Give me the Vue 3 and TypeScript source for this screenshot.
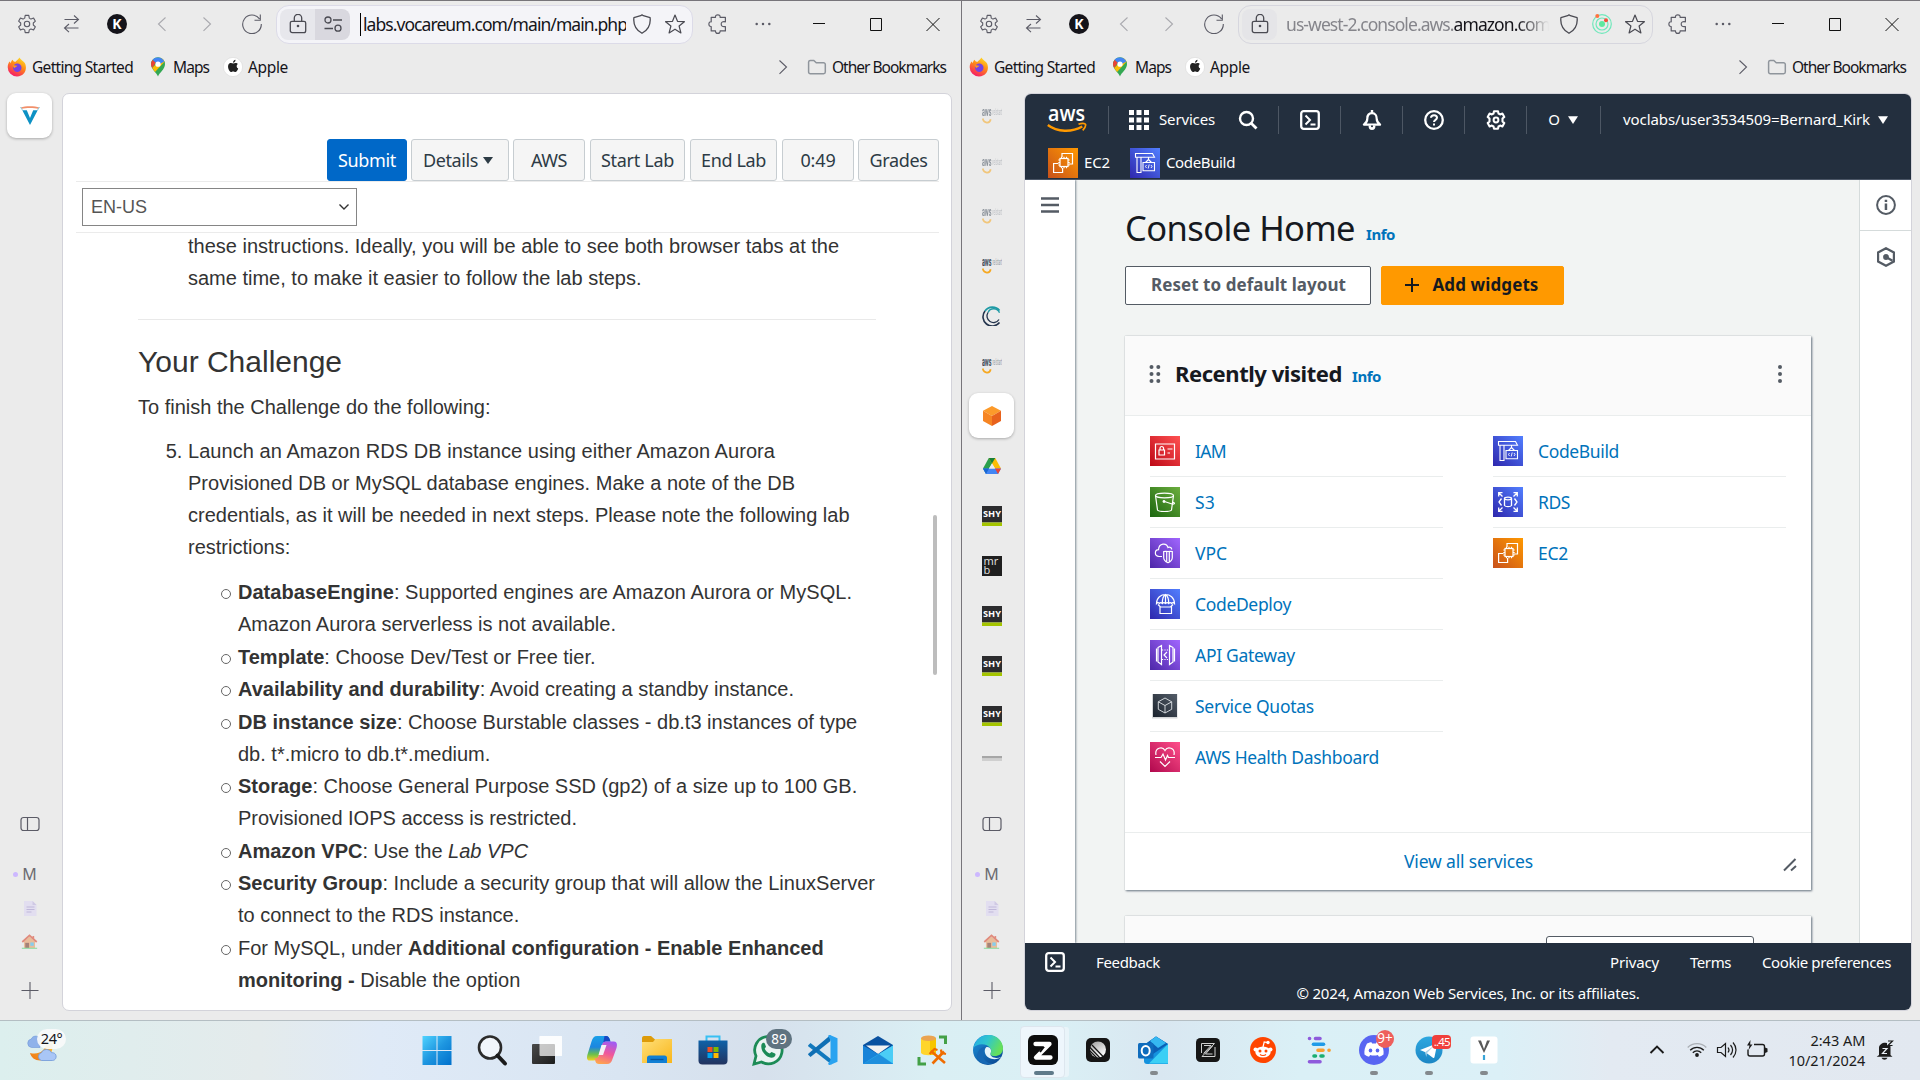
<script setup lang="ts">
interface BrowserWindow {
  id: string
  active: boolean
  tabs: { kind: string; faded?: boolean; selected?: boolean }[]
}

interface Service {
  name: string
  icon: string
  width: number
}

const windows: BrowserWindow[] = [
  { id: 'lab', active: true, tabs: [{ kind: 'voc', selected: true }] },
  {
    id: 'console',
    active: false,
    tabs: [
      { kind: 'aws', faded: true },
      { kind: 'aws', faded: true },
      { kind: 'aws', faded: true },
      { kind: 'aws' },
      { kind: 'coursera' },
      { kind: 'aws' },
      { kind: 'cube', selected: true },
      { kind: 'drive' },
      { kind: 'shy' },
      { kind: 'mrb' },
      { kind: 'shy' },
      { kind: 'shy' },
      { kind: 'shy' },
      { kind: 'cut' },
    ],
  },
]

const firstColumn: Service[] = [
  { name: 'IAM', icon: 'iam', width: 31 },
  { name: 'S3', icon: 's3', width: 20 },
  { name: 'VPC', icon: 'vpc', width: 32 },
  { name: 'CodeDeploy', icon: 'deploy', width: 96 },
  { name: 'API Gateway', icon: 'gateway', width: 100 },
  { name: 'Service Quotas', icon: 'quotas', width: 119 },
  { name: 'AWS Health Dashboard', icon: 'health', width: 184 },
]
const secondColumn: Service[] = [
  { name: 'CodeBuild', icon: 'build', width: 81 },
  { name: 'RDS', icon: 'rds', width: 32 },
  { name: 'EC2', icon: 'ec2', width: 30 },
]

const labButtons = [
  { label: 'Submit', box: 80, text: 58, gap: 4, primary: true },
  { label: 'Details', box: 98, text: 55, gap: 4, caret: true },
  { label: 'AWS', box: 72, text: 36, gap: 5 },
  { label: 'Start Lab', box: 95, text: 73, gap: 5 },
  { label: 'End Lab', box: 87, text: 65, gap: 5 },
  { label: '0:49', box: 72, text: 35, gap: 4 },
  { label: 'Grades', box: 81, text: 58, gap: 0 },
]

const apps = [
  { icon: 'start' },
  { icon: 'find' },
  { icon: 'taskview' },
  { icon: 'copilot' },
  { icon: 'explorer' },
  { icon: 'store' },
  { icon: 'whatsapp', badge: '89', tone: 'slate' },
  { icon: 'vscode' },
  { icon: 'mail' },
  { icon: 'dbtool' },
  { icon: 'edge' },
  { icon: 'zen', open: true, current: true },
  { icon: 'linear' },
  { icon: 'outlook', open: true },
  { icon: 'zed' },
  { icon: 'reddit' },
  { icon: 'tasks' },
  { icon: 'discord', open: true, badge: '9+', tone: 'coral' },
  { icon: 'telegram', open: true, badge: '..45', tone: 'red' },
  { icon: 'vapp', open: true },
]

// Tracks a label out or in so that it takes the given width in pixels.
const vFit = {
  mounted(el: HTMLElement, binding: { value: number }) {
    const natural = el.getBoundingClientRect().width
    const count = (el.textContent ?? '').trim().length
    el.style.letterSpacing = `${((binding.value - natural) / count).toFixed(3)}px`
  },
}
</script>

<template>
  <svg class="defs" width="0" height="0" aria-hidden="true">
    <defs>
      <linearGradient id="gOrange" x1="0" y1="1" x2="1" y2="0"><stop offset="0" stop-color="#c8511b" /><stop offset="1" stop-color="#f90" /></linearGradient>
      <linearGradient id="gBlue" x1="0" y1="1" x2="1" y2="0"><stop offset="0" stop-color="#2e27ad" /><stop offset="1" stop-color="#527fff" /></linearGradient>
      <linearGradient id="gRed" x1="0" y1="1" x2="1" y2="0"><stop offset="0" stop-color="#bd0816" /><stop offset="1" stop-color="#ff5252" /></linearGradient>
      <linearGradient id="gGreen" x1="0" y1="1" x2="1" y2="0"><stop offset="0" stop-color="#1b660f" /><stop offset="1" stop-color="#6cae3e" /></linearGradient>
      <linearGradient id="gPurple" x1="0" y1="1" x2="1" y2="0"><stop offset="0" stop-color="#4d27a8" /><stop offset="1" stop-color="#a166ff" /></linearGradient>
      <linearGradient id="gPink" x1="0" y1="1" x2="1" y2="0"><stop offset="0" stop-color="#b0084d" /><stop offset="1" stop-color="#ff4f8b" /></linearGradient>
      <linearGradient id="gSlate" x1="0" y1="1" x2="1" y2="0"><stop offset="0" stop-color="#1a222c" /><stop offset="1" stop-color="#545d69" /></linearGradient>
      <linearGradient id="gWin" x1="0" y1="0" x2="1" y2="1"><stop offset="0" stop-color="#4fd3ff" /><stop offset=".5" stop-color="#1e96e0" /><stop offset="1" stop-color="#0070cc" /></linearGradient>
      <linearGradient id="gFolder" x1="0" y1="0" x2="1" y2="1"><stop offset="0" stop-color="#ffe07a" /><stop offset="1" stop-color="#f9b61b" /></linearGradient>
      <linearGradient id="gStore" x1="0" y1="0" x2="0" y2="1"><stop offset="0" stop-color="#0f62a8" /><stop offset="1" stop-color="#22335f" /></linearGradient>
      <linearGradient id="gFox" x1=".8" y1="0" x2=".3" y2="1"><stop offset="0" stop-color="#ffe226" /><stop offset=".45" stop-color="#ff8a16" /><stop offset="1" stop-color="#f5156c" /></linearGradient>
      <linearGradient id="gCopA" x1="0" y1="0" x2="0" y2="1"><stop offset="0" stop-color="#1aa0e8" /><stop offset=".45" stop-color="#1c86e0" /><stop offset=".75" stop-color="#6cc04a" /><stop offset="1" stop-color="#f2d321" /></linearGradient>
      <linearGradient id="gCopB" x1=".6" y1="0" x2=".3" y2="1"><stop offset="0" stop-color="#a35cf0" /><stop offset=".5" stop-color="#f0579b" /><stop offset="1" stop-color="#ffa64d" /></linearGradient>
      <linearGradient id="gEdgeA" x1="0" y1="0" x2="1" y2=".4"><stop offset="0" stop-color="#25a8e8" /><stop offset=".5" stop-color="#2fc6ce" /><stop offset="1" stop-color="#66e05a" /></linearGradient>
      <linearGradient id="gEdgeB" x1="0" y1="0" x2=".7" y2="1"><stop offset="0" stop-color="#1d96e0" /><stop offset="1" stop-color="#0c4c96" /></linearGradient>
      <linearGradient id="gTg" x1="0" y1="0" x2="0" y2="1"><stop offset="0" stop-color="#2ea8e0" /><stop offset="1" stop-color="#1c86c4" /></linearGradient>
      <linearGradient id="gBall" x1="0" y1="0" x2=".6" y2="1"><stop offset="0" stop-color="#9a9a9a" /><stop offset="1" stop-color="#fff" /></linearGradient>
      <linearGradient id="gMoon" x1="1" y1="0" x2="0" y2="1"><stop offset="0" stop-color="#fbc23c" /><stop offset="1" stop-color="#ee7410" /></linearGradient>
      <linearGradient id="gView" x1="0" y1="0" x2="1" y2="1"><stop offset="0" stop-color="#4a4a4a" /><stop offset="1" stop-color="#1c1c1c" /></linearGradient>
    </defs>

    <symbol id="gear" viewBox="0 0 20 20"><g fill="none" stroke="currentColor" stroke-width="1.100" stroke-linejoin="round"><path d="M8.200.7h3.600l.5 2.700 1.700 1 2.600-1 1.800 3.100-2.100 1.800v2l2.100 1.800-1.800 3.100-2.600-1-1.700 1-.5 2.700H8.200l-.5-2.700-1.700-1-2.600 1L1.600 12.100l2.100-1.800v-2L1.600 6.500l1.800-3.100 2.600 1 1.700-1z" transform="translate(0 .7)" /><circle cx="10" cy="10" r="2.700" /></g></symbol>
    <symbol id="swap" viewBox="0 0 20 20"><path d="M2.500 5.500h14M12 1.500l4.500 4-4.500 4M16.500 14h-14M7 10l-4.500 4L7 18.200" fill="none" stroke="currentColor" stroke-width="1.100" /></symbol>
    <symbol id="back" viewBox="0 0 20 20"><path d="M13.500 3.500L6.500 10l7 6.800" fill="none" stroke="currentColor" stroke-width="1.100" /></symbol>
    <symbol id="fwd" viewBox="0 0 20 20"><path d="M6.500 3.500l7 6.500-7 6.800" fill="none" stroke="currentColor" stroke-width="1.100" /></symbol>
    <symbol id="reload" viewBox="0 0 20 20"><path d="M17.500 4.800A9.300 9.300 0 1 0 19.300 10M18.300.5v5.800h-5.800" fill="none" stroke="currentColor" stroke-width="1.100" /></symbol>
    <symbol id="lock" viewBox="0 0 20 20"><path d="M4 7.300h12a1.700 1.700 0 0 1 1.700 1.700v7.700a1.900 1.900 0 0 1-1.900 1.900H4.200a1.900 1.900 0 0 1-1.900-1.900V9A1.700 1.700 0 0 1 4 7.300zM6.300 7.300V4a3.700 3.700 0 0 1 7.400 0v3.300" fill="none" stroke="currentColor" stroke-width="1.300" /><circle cx="10" cy="12" r="1.300" fill="currentColor" /></symbol>
    <symbol id="perms" viewBox="0 0 20 20"><g fill="none" stroke="currentColor" stroke-width="1.300"><circle cx="5" cy="6" r="3" /><path d="M10 6h9M1.500 14.500h8.500" /><circle cx="15" cy="14.200" r="3" /></g></symbol>
    <symbol id="shield" viewBox="0 0 20 20"><path d="M10 .8l1.300.9 6.800 2c.7 6.500-1.500 12-8.100 15.600C3.400 15.700 1.200 10.200 1.900 3.700l6.800-2z" fill="none" stroke="currentColor" stroke-width="1.300" stroke-linejoin="round" /></symbol>
    <symbol id="star" viewBox="0 0 20 20"><path d="M10 1l2.500 6.300 6.900.4-5.300 4.300 1.800 6.900L10 15.200l-5.900 3.700 1.800-6.900L.6 7.700l6.900-.4z" fill="none" stroke="currentColor" stroke-width="1.200" stroke-linejoin="round" /></symbol>
    <symbol id="puzzle" viewBox="0 0 20 20"><path d="M3.200 3.300h4.300C7.300 1.700 8.300.8 9.800.8s2.500.9 2.300 2.500h5.300v4.500c-3.300-.6-4.200.7-4.200 2.300s.9 3 4.200 2.400v4.400h-5.300c.2 1.600-.8 2.500-2.300 2.500s-2.500-.9-2.300-2.500H3.200v-4.400C1.500 12.600.9 11.600.9 10.100s.6-2.500 2.300-2.300z" fill="none" stroke="currentColor" stroke-width="1.200" stroke-linejoin="round" /></symbol>
    <symbol id="dots" viewBox="0 0 20 20"><g fill="currentColor"><circle cx="3" cy="10" r="1.400" /><circle cx="10" cy="10" r="1.400" /><circle cx="17" cy="10" r="1.400" /></g></symbol>
    <symbol id="wmin" viewBox="0 0 20 20"><path d="M4 9.500h12" stroke="currentColor" /></symbol>
    <symbol id="wmax" viewBox="0 0 20 20"><path d="M4.500 4.500h11v12h-11z" fill="none" stroke="currentColor" /></symbol>
    <symbol id="wclose" viewBox="0 0 20 20"><path d="M3.500 4l13 13M16.500 4l-13 13" stroke="currentColor" /></symbol>
    <symbol id="folder" viewBox="0 0 20 20"><path d="M1.600 5A1.700 1.700 0 0 1 3.300 3.500h3.500l2.500 2.300h7.200A1.700 1.700 0 0 1 18.300 7.500v7.600a1.700 1.700 0 0 1-1.700 1.700H3.300a1.700 1.700 0 0 1-1.700-1.700z" fill="none" stroke="#8f959c" stroke-width="1.500" /></symbol>
    <symbol id="radar" viewBox="0 0 20 20"><g fill="none" stroke="#6fe8bb" stroke-width="1.200"><circle cx="10" cy="10" r="9.300" /><circle cx="10" cy="10" r="6" /></g><circle cx="10" cy="10" r="3" fill="#5fe8a0" /><circle cx="5.300" cy="2" r="2" fill="#ff7340" /><circle cx="14" cy="6.300" r="2" fill="#f4503c" /></symbol>
    <symbol id="firefox" viewBox="0 0 20 20"><path d="M10 19.500A9.300 9.300 0 0 1 .7 10.200c0-2.600.8-4.300 2-5.700l1.200 1.700C4 4.500 4.700 3.500 5.800 2.800c.2 1.200.9 1.800 2.400 2.200C10 2.800 11.500 2.500 12.300.4c1.500 2.200 3.800 3.400 4.600 4.700 3.800 3.500 2.700 14.400-6.900 14.400z" fill="url(#gFox)" /><circle cx="10.300" cy="10.800" r="4.200" fill="#7542e5" /><path d="M5.500 8.500c2-.8 3.500.5 5 .2-.8 1.400-2.700 1.300-3 2.600z" fill="#ff9a1a" /></symbol>
    <symbol id="pin" viewBox="0 0 20 20"><path d="M10 19.500C9 16 3 12.500 3 7.300a7 7 0 0 1 14 0c0 5.200-6 8.700-7 12.200z" fill="#34a853" /><path d="M3 7.300a7 7 0 0 1 1.700-4.500L8 5.500l-3.800 5.600A8 8 0 0 1 3 7.300z" fill="#ea4335" /><path d="M4.200 11.100L13.500 1.300c1.500.8 2.500 2 3 3.500L7 15z" fill="#fbbc04" /><path d="M4.700 2.800A7 7 0 0 1 16.300 4.400L11 7.500 8 6z" fill="#4285f4" /><circle cx="10" cy="7.200" r="2.600" fill="#fff" /></symbol>
    <symbol id="apple" viewBox="0 0 20 20"><circle cx="10" cy="10" r="9.600" fill="#fff" stroke="#ddd" stroke-width=".7" /><path d="M10.200 6.400c.9 0 1.600-.7 2.900-.4.700.1 1.300.5 1.700 1-1.700 1.200-1.400 3.700.4 4.500-.5 1.400-1.600 3.600-2.800 3.600-.9 0-1.200-.5-2.200-.5s-1.400.5-2.200.5c-1.600 0-4.700-6-1.700-8.500 1.500-1.100 2.900-.2 3.900-.2zM10 5.800c0-1.700 1.200-2.800 2.500-3 .2 1.600-1.100 3-2.500 3z" fill="#222" /></symbol>
    <symbol id="panel" viewBox="0 0 20 20"><g fill="none" stroke="currentColor" stroke-width="1.200"><rect x="1" y="3.500" width="18" height="13" rx="2.500" /><path d="M7.500 3.500v13" /></g></symbol>
    <symbol id="plus" viewBox="0 0 20 20"><path d="M1.500 10.500h17M10 2v17" stroke="currentColor" stroke-width="1.100" /></symbol>
    <symbol id="doc" viewBox="0 0 20 20"><path d="M4 3h8.500l4 4v11H4z" fill="#e2def0" /><path d="M12.500 3l4 4h-4z" fill="#cfc9e4" /><path d="M6.500 9h8M6.500 11.500h8M6.500 14h5" stroke="#c0b8da" stroke-width="1" /></symbol>
    <symbol id="house" viewBox="0 0 20 20"><path d="M3.500 9L10 3.500 16.500 9v8h-13z" fill="#e9bd9a" /><path d="M1.500 10L10 2.200 18.500 10" fill="none" stroke="#e08a7c" stroke-width="2" /><path d="M13.500 3h2v3h-2z" fill="#e08a7c" /><path d="M5 11h4.500v6H5z" fill="#a58278" /><path d="M11 10.500h4v4h-4z" fill="#86cdec" /><path d="M1 17.400h18" stroke="#8edca0" stroke-width="1.300" /></symbol>

    <symbol id="t-voc" viewBox="0 0 20 20"><path d="M.5 1.500c5-1.600 14-1.600 19 0l-.8 1.500c-5-1.300-12.400-1.300-17.400 0z" fill="#f1906b" /><path d="M.5 1l2 3.200M19.500 1l-2 3.200" stroke="#8fd0e6" stroke-width="1" /><path d="M2.300 4.300h4.500L10 12l3.200-7.700h4.500L10 19z" fill="#0d91c4" /></symbol>
    <symbol id="t-coursera" viewBox="0 0 20 20"><g fill="none" stroke-width="1.300"><path d="M17.500 4.500A9 9 0 0 0 3 5" stroke="#1e9aa5" stroke-width="1.800" /><path d="M3 5a9 9 0 0 0 14.500 11.500" stroke="#24344d" stroke-width="1.600" /><path d="M17.500 6.800A6.200 6.200 0 0 0 6 6.500" stroke="#1e9aa5" /><path d="M6 6.500a6.200 6.200 0 0 0 11 7" stroke="#24344d" /></g></symbol>
    <symbol id="t-cube" viewBox="0 0 20 20"><path d="M10 0l9 4.700L10 10 1 4.700z" fill="#fc9a2a" /><path d="M1 4.700L10 10v10l-9-5z" fill="#f68523" /><path d="M19 4.700L10 10v10l9-5z" fill="#e8621c" /></symbol>
    <symbol id="t-drive" viewBox="0 0 20 20"><path d="M6.800 2h6.400L10 7.500l-6 10.300L1 12.500z" fill="#2aa04c" /><path d="M6.800 2h6.400l5.800 10.500h-6z" fill="#fbbd05" /><path d="M6.800 2h6.400L10 7.500z" fill="#188038" /><path d="M1 12.500h18l-3 5.500H4z" fill="#4285f4" /><path d="M13 12.500h6L16 18z" fill="#ea4335" /><path d="M1 12.500h6L4 18z" fill="#1967d2" /><path d="M10 7.500l3 5H7z" fill="#ebebeb" /></symbol>
    <symbol id="t-cut" viewBox="0 0 20 20"><path d="M0 0h20v2.500H0z" fill="#a6a6a6" /><path d="M0 2.500h20V5H0z" fill="#cfcfcf" /></symbol>

    <symbol id="grid" viewBox="0 0 20 20"><path d="M0 0h5v5H0zM7.500 0h5v5h-5zM15 0h5v5h-5zM0 7.500h5v5H0zM7.500 7.500h5v5h-5zM15 7.500h5v5h-5zM0 15h5v5H0zM7.500 15h5v5h-5zM15 15h5v5h-5z" fill="currentColor" /></symbol>
    <symbol id="search" viewBox="0 0 20 20"><circle cx="8.500" cy="8.500" r="6.500" fill="none" stroke="currentColor" stroke-width="2.400" /><path d="M13.200 13.200l5.300 5.300" stroke="currentColor" stroke-width="2.800" /></symbol>
    <symbol id="shell" viewBox="0 0 20 20"><rect x="1.200" y="1.200" width="17.600" height="17.600" rx="2.500" fill="none" stroke="currentColor" stroke-width="2.300" /><path d="M5.500 5.500l4.500 4.500-4.500 4.500M10.500 14.500h5" fill="none" stroke="currentColor" stroke-width="2" /></symbol>
    <symbol id="bell" viewBox="0 0 20 20"><path d="M10 3.200c-3.300 0-4.700 2.500-4.700 5.500 0 3-1.200 4.300-3.400 6h16.200c-2.200-1.700-3.400-3-3.400-6 0-3-1.400-5.500-4.700-5.500z" fill="none" stroke="currentColor" stroke-width="2.200" stroke-linejoin="round" /><path d="M10 0v3" stroke="currentColor" stroke-width="2.400" /><path d="M6.500 15.500a3.500 4.500 0 0 0 7 0z" fill="currentColor" /><circle cx="10" cy="16.300" r="1" fill="#232f3e" /></symbol>
    <symbol id="help" viewBox="0 0 20 20"><circle cx="10" cy="10" r="8.800" fill="none" stroke="currentColor" stroke-width="2.300" /><path d="M7 7.800c.1-3.500 6-3.500 6 0 0 2.200-3 2-3 4.200" fill="none" stroke="currentColor" stroke-width="2" /><path d="M9 13.500h2v2H9z" fill="currentColor" /></symbol>
    <symbol id="cog" viewBox="0 0 20 20"><path d="M8 1.200h4l.5 2.300 1.600.9 2.300-.8 1.900 3.300L16.500 8.500v3l1.800 1.600-1.900 3.300-2.300-.8-1.600.9-.5 2.300H8l-.5-2.300-1.600-.9-2.300.8-1.900-3.300 1.800-1.600v-3L1.700 6.900l1.900-3.300 2.300.8 1.600-.9z" fill="none" stroke="currentColor" stroke-width="2.100" stroke-linejoin="round" /><circle cx="10" cy="10" r="2.400" fill="none" stroke="currentColor" stroke-width="2" /></symbol>
    <symbol id="tri" viewBox="0 0 10 8"><path d="M0 .3h10L5 8z" fill="currentColor" /></symbol>
    <symbol id="info" viewBox="0 0 20 20"><circle cx="10" cy="10" r="8.900" fill="none" stroke="currentColor" stroke-width="2" /><path d="M8.700 4.700h2.500v2.400H8.700zM8.700 8.500h2.500v6.500H8.700z" fill="currentColor" /></symbol>
    <symbol id="hexa" viewBox="0 0 20 20"><path d="M10 1.200l7.900 4.300v9L10 18.800l-7.900-4.300v-9z" fill="none" stroke="currentColor" stroke-width="2.200" /><circle cx="10" cy="10" r="2.900" fill="currentColor" /><path d="M10 10l6.500 3.700" stroke="currentColor" stroke-width="2.200" /></symbol>

    <symbol id="s-ec2" viewBox="0 0 30 30"><path d="M0 0h30v30H0z" fill="url(#gOrange)" /><g fill="none" stroke="#fff" stroke-width="1.200"><path d="M14 9V5.500h10.500V16H21M10.500 15.500H5.600v9h9V20" /><rect x="12" y="10.500" width="8" height="8" /><path d="M13.500 8.800v1.700M16 8.800v1.700M18.500 8.800v1.700M13.500 18.500v1.700M16 18.500v1.700M18.500 18.500v1.700M10.300 12h1.700M10.300 14.500H12M10.300 17H12M20 12h1.700M20 14.500h1.700M20 17h1.700" /></g></symbol>
    <symbol id="s-build" viewBox="0 0 30 30"><path d="M0 0h30v30H0z" fill="url(#gBlue)" /><g fill="none" stroke="#fff" stroke-width="1.100"><path d="M5.500 5.500h17l2 3.700h-19zM7 9.200v15.300h4V9.200M18.500 9v3.500M18.500 11.500l-3 3M18.500 11.500l3 3M13 14.500h11.500v8.300H13z" /><path d="M16.500 17l-1 1.500 1 1.500M18.200 20.500l1-4M21 17l1 1.500-1 1.500" stroke-width=".9" /></g></symbol>
    <symbol id="s-iam" viewBox="0 0 30 30"><path d="M0 0h30v30H0z" fill="url(#gRed)" /><g fill="none" stroke="#fff" stroke-width="1.200"><path d="M5.500 8h19v15h-19zM9 14h5.500v5H9zM10 14v-1.500a1.800 2 0 0 1 3.600 0V14M17.500 13h5M17.500 17h2.500" /></g></symbol>
    <symbol id="s-s3" viewBox="0 0 30 30"><path d="M0 0h30v30H0z" fill="url(#gGreen)" /><g fill="none" stroke="#fff" stroke-width="1.200"><ellipse cx="14.500" cy="8.500" rx="9" ry="2.300" /><path d="M5.500 8.500l2 14.500c1 2 13 2 14 0l2-14.500M14.500 14.500l7.500 2.500c2 .4 3-.3 2-1.300l-1.300-.8" /></g><circle cx="14" cy="14.500" r="1.400" fill="#fff" /></symbol>
    <symbol id="s-vpc" viewBox="0 0 30 30"><path d="M0 0h30v30H0z" fill="url(#gPurple)" /><g fill="none" stroke="#fff" stroke-width="1.200"><path d="M12 18.500H9c-5-.5-4.500-6.500-.5-6.800C9 5 16.500 4.500 18 9.500c2-1.200 3.800.5 3.700 2" /><path d="M18 13.500c1.500-.2 3-.2 4.300 0v6c0 3-2 4.300-4.300 5.300-2.300-1-4.300-2.300-4.300-5.300v-6c1.300-.2 2.800-.2 4.300 0zM16.700 13.500v10.500M19.300 13.500v10.500" /></g></symbol>
    <symbol id="s-deploy" viewBox="0 0 30 30"><path d="M0 0h30v30H0z" fill="url(#gBlue)" /><g fill="none" stroke="#fff" stroke-width="1.200"><path d="M6.500 14.500c.3-12 17.700-12 18 0q-1.500-1.800-3 0-1.300-1.800-2.800 0-1.500-1.800-3.200 0-1.700-1.800-3.200 0-1.500-1.800-2.800 0-1.500-1.800-3 0zM12.300 14c0-4 .8-7 3.200-8.500 2.400 1.500 3.200 4.500 3.200 8.500M15.500 5.500V14M8 15.500l2.500 2.500M23 15.500L20.500 18M10 18h11.500v6.500H10z" /></g></symbol>
    <symbol id="s-gateway" viewBox="0 0 30 30"><path d="M0 0h30v30H0z" fill="url(#gPurple)" /><g fill="none" stroke="#fff" stroke-width="1.200"><path d="M6.500 8.500v13M8 7.500l3.500-2v19L8 22zM24.500 8.500v13M23 7.500l-3.500-2v19L23 22z" /><path d="M12 10h7.500M12 19.500h7.500" stroke-dasharray="1.200 1.200" /><path d="M17 12l-3 3 3 3" /></g></symbol>
    <symbol id="s-quotas" viewBox="0 0 30 30"><path d="M2 3h25.500v24.500H2z" fill="#d5d7d8" /><path d="M3 3h24v23H3z" fill="url(#gSlate)" /><g fill="none" stroke="#dfe3e6" stroke-width=".9"><path d="M15 7l6.700 3.800v7.500L15 22l-6.700-3.700v-7.500zM8.300 10.800L15 14.500l6.700-3.700M15 14.500V22" /></g></symbol>
    <symbol id="s-health" viewBox="0 0 30 30"><path d="M0 0h30v30H0z" fill="url(#gPink)" /><g fill="none" stroke="#fff" stroke-width="1.200"><path d="M6 13c-1.500-7.500 6.500-9 9-4.500 2.500-4.500 10.500-3 9 4.500M10 19.500l5 5 5-5M5 15.500h6l2-3.500 2.500 6 2-4.500 1 2H25" /></g></symbol>
    <symbol id="s-rds" viewBox="0 0 30 30"><path d="M0 0h30v30H0z" fill="url(#gBlue)" /><g fill="none" stroke="#fff" stroke-width="1.300"><path d="M5.700 9.500V5.700h3.800M5.700 5.700L9.500 9.500M24.300 9.500V5.700h-3.800M24.300 5.700l-3.800 3.800M5.700 20.500v3.800h3.800M5.700 24.300l3.800-3.800M24.300 20.500v3.800h-3.800M24.300 24.300l-3.800-3.800M8.500 11.500l-2.500 3.500 2.500 3.500M21.500 11.500l2.500 3.500-2.500 3.500M11.500 11.500v7c1 1.500 6 1.500 7 0v-7" /><ellipse cx="15" cy="11.500" rx="3.500" ry="1.300" /></g></symbol>

    <symbol id="a-start" viewBox="0 0 36 36"><path d="M3.500 4h14v14h-14zM18.500 4h14v14h-14zM3.500 19h14v14h-14zM18.500 19h14v14h-14z" fill="url(#gWin)" /></symbol>
    <symbol id="a-find" viewBox="0 0 36 36"><circle cx="16" cy="15.500" r="11" fill="#f1f5fa" stroke="#2b2b2b" stroke-width="2.600" /><path d="M23.500 23.500l7.500 8" stroke="#1b1b1b" stroke-width="4" stroke-linecap="round" /></symbol>
    <symbol id="a-taskview" viewBox="0 0 36 36"><rect x="3" y="12" width="23" height="20" rx="1" fill="url(#gView)" /><rect x="10.500" y="4" width="22.500" height="20" rx="1" fill="#fdfdfd" opacity=".72" /><path d="M26 4h7v20h-7zM10.500 4H26v8H10.500z" fill="#fff" opacity=".7" /></symbol>
    <symbol id="a-copilot" viewBox="0 0 36 36"><path d="M13 4h9c3 0 3.500 2.500 4.500 5.500h-4c-3 0-4 2-5 5l-3 10c-1 3-2.500 4-5 4H5.500c-2.500 0-3-2.500-2-6l4-13c1-3.500 2.500-5.500 5.500-5.500z" fill="url(#gCopA)" /><path d="M20.500 4H22c3 0 3.500 2.500 4.500 5.500h-4c-1.500 0-2.500.5-3.300 1.500z" fill="#1748c4" /><path d="M23 32h-8c-3.500 0-3.500-3-4.500-6 2.500 1 4-1 4.500-3l3-10c.8-2.500 1.500-3.500 4-3.500h8c3 0 3.500 3 2.500 6.500l-4 11C27.500 30.500 26 32 23 32z" fill="url(#gCopB)" /><path d="M17.500 13h5l-3.500 10h-4.500z" fill="#f4f1f6" /></symbol>
    <symbol id="a-explorer" viewBox="0 0 36 36"><path d="M3 6.500C3 5 3.500 4 5 4h7l4 3.500V12H3z" fill="#dd9b0a" /><path d="M3 10h11l2.500-3H33v24H3z" fill="url(#gFolder)" /><path d="M8 31v-5c0-1.500.8-2.500 2.500-2.500h15c1.700 0 2.500 1 2.500 2.500v5z" fill="#117fd4" /><path d="M11.500 27.500h13" stroke="#0a559b" stroke-width="1.300" /></symbol>
    <symbol id="a-store" viewBox="0 0 36 36"><path d="M11.500 9V4.500h13V9" fill="none" stroke="#38c0f3" stroke-width="2" /><path d="M3.500 8.500h29v20a4 4 0 0 1-4 4h-21a4 4 0 0 1-4-4z" fill="url(#gStore)" /><path d="M12.500 15h5v5h-5z" fill="#f25022" /><path d="M18.500 15h5v5h-5z" fill="#7fba00" /><path d="M12.500 21h5v5h-5z" fill="#00a4ef" /><path d="M18.500 21h5v5h-5z" fill="#ffb900" /></symbol>
    <symbol id="a-whatsapp" viewBox="0 0 36 36"><path d="M4 32l2-8A13.700 13.700 0 1 1 11.500 30z" fill="#eaf3f2" stroke="#1c8b56" stroke-width="2.800" /><path d="M11.500 12.500c1-2.500 3-2 3.500-.5l1 2.800-1.300 2c1.400 2.500 2.800 3.800 5 4.700l1.800-1.600 3.500 1.500c1 .7.500 2.500-.8 3.500-5 3.500-14.500-5-12.700-12.400z" fill="#1c8b56" /></symbol>
    <symbol id="a-vscode" viewBox="0 0 36 36"><path d="M3 13.500l2.500-2.500 21 16.500v5L3.500 14.500z" fill="#1279bd" /><path d="M3 22.500l2.500 2.500 20-16V3L3.500 21.500z" fill="#0f6fb4" /><path d="M25 3l7.500 3.300v23.400L25 33c-1 0-1.500-.5-2-1l2.500-4V8L23 4c.5-.6 1-1 2-1z" fill="#2aa3f0" /></symbol>
    <symbol id="a-mail" viewBox="0 0 36 36"><path d="M3 13L18 4l15 9v18H3z" fill="#0a52a0" /><path d="M6 13.500h24L18 22z" fill="#f2f2f2" /><path d="M3 13.500l16 9L33 32H3z" fill="#1883d8" /><path d="M33 13.500L12 26l-9 6h30z" fill="#28a8ea" /><path d="M33 13.500L19 22l14 9.500z" fill="#4bcdf6" /><path d="M3 32L19 22.500 33 32z" fill="#1f8fdd" /></symbol>
    <symbol id="a-dbtool" viewBox="0 0 36 36"><path d="M6 6v15c2 3 13 3 15 0V6z" fill="#ffd52c" /><path d="M15 6h6v15c-1.500 1.500-3 2-6 2z" fill="#f7c600" /><ellipse cx="13.500" cy="6.300" rx="7.500" ry="2.800" fill="#eaa451" /><path d="M24 5h6.500v7M4 25v7h7" fill="none" stroke="#43a047" stroke-width="3" /><path d="M16 19l14 12M29 19.500L17.500 31.500" stroke="#ef6c00" stroke-width="2.600" /><path d="M14.500 22l5-5 3 1M26 17.500l.5 3.500 4.500 1" fill="none" stroke="#ef6c00" stroke-width="2.200" /></symbol>
    <symbol id="a-edge" viewBox="0 0 36 36"><circle cx="18" cy="18" r="15" fill="url(#gEdgeB)" /><path d="M3.300 16C6 6.500 12 3 18.500 3 27 3 33 9 33 16.500c0 5-4 7.500-8.500 7.500-3.500 0-5-1.500-4-3 .8-1.300 1-2.800 0-4.500C17.500 11.500 8 10.500 3.300 16z" fill="url(#gEdgeA)" /><path d="M20.500 16.500c-3-2.500-8 1-7.500 6.500.5 5.500 5.500 9.500 11.500 8.500-12 3-21-3.500-16-12.500 2.500-4.500 9-6 12-2.500z" fill="#1668b4" /><path d="M16.500 15c-3 2.500-2 8 2 10.500 4 2.600 9.500 2 12.800-.5-3 1-7 1.500-9.500-.5-1.500-1.200-2-2.500-1-4 1-2.200-.3-6-4.300-5.500z" fill="#e4f4fb" /></symbol>
    <symbol id="a-zen" viewBox="0 0 36 36"><rect x="3" y="3" width="30" height="30" rx="6" fill="#0c0c0c" /><path d="M10.500 12H24.500L11 25.500h14.500" fill="none" stroke="#fff" stroke-width="4.300" stroke-linejoin="round" stroke-linecap="round" /><path d="M8 15.500l10 .5-3 4" fill="none" stroke="#0c0c0c" stroke-width="2" /></symbol>
    <symbol id="a-linear" viewBox="0 0 36 36"><rect x="6" y="6" width="24" height="24" rx="5" fill="#151515" /><circle cx="18" cy="17.500" r="8" fill="url(#gBall)" /><path d="M9.500 15l11 11.500M9.500 18.500l8.500 8.500M12 13l11 11.500" stroke="#151515" stroke-width="1.200" /></symbol>
    <symbol id="a-outlook" viewBox="0 0 36 36"><path d="M9 13l12-8.500L33 12v20H12a3 3 0 0 1-3-3z" fill="#1492de" /><path d="M33 12v19.500H14z" fill="#3bcff5" /><path d="M9 13l12-8.500L33 12l-15 10z" fill="#0b5fb5" /><path d="M15 9L21 4.500 31 11l-8 5z" fill="#35b8f1" /><rect x="3" y="11" width="15.500" height="15.500" rx="1.500" fill="#0f6cbd" /><ellipse cx="10.700" cy="18.700" rx="4" ry="4.700" fill="none" stroke="#fff" stroke-width="2" /></symbol>
    <symbol id="a-zed" viewBox="0 0 36 36"><rect x="6" y="6" width="24" height="24" rx="4.500" fill="#161616" /><g fill="none" stroke="#d0d0d0" stroke-width="1"><path d="M11.500 21V11.500h13L12 24.500h13V15M14 13.500h7l-7.500 8M22.500 22h-7l7-8" /></g></symbol>
    <symbol id="a-reddit" viewBox="0 0 36 36"><circle cx="18" cy="18" r="13" fill="#ff4500" /><ellipse cx="18" cy="20" rx="7.700" ry="5.600" fill="#fff" /><circle cx="10.500" cy="17.500" r="2" fill="#fff" /><circle cx="25.500" cy="17.500" r="2" fill="#fff" /><circle cx="23" cy="10.500" r="1.700" fill="#fff" /><path d="M18 15l1.200-5 3.500.6" fill="none" stroke="#fff" stroke-width="1.200" /><circle cx="15" cy="19" r="1.500" fill="#ff4500" /><circle cx="21" cy="19" r="1.500" fill="#ff4500" /><path d="M15 22.500c1.500 1.300 4.500 1.300 6 0" fill="none" stroke="#ff4500" stroke-width="1.100" /></symbol>
    <symbol id="a-tasks" viewBox="0 0 36 36"><g stroke-width="3.600" stroke-linecap="round"><path d="M8.500 6.500h.1M14.500 6.500h4.500" stroke="#8e5bdc" /><path d="M12.500 12.300h10" stroke="#1e9be8" /><path d="M17 18.200h5M28 18.200h.1" stroke="#f7a032" /><path d="M13 24h1.500M20 24h2" stroke="#1aae72" /><path d="M8.500 29.700h10.500" stroke="#8e5bdc" /></g></symbol>
    <symbol id="a-discord" viewBox="0 0 36 36"><circle cx="18" cy="18" r="15" fill="#5865f2" /><path d="M11 11.500c2-1 3.500-1.300 4.500-1.300l.6 1.300h3.800l.6-1.300c1 0 2.500.3 4.500 1.300 2 3.500 3 7 2.500 11-1.500 1.200-3 2-4.500 2.300l-1.200-1.800c-2.500.7-5.100.7-7.600 0L13 24.800c-1.500-.3-3-1.100-4.500-2.300-.5-4 .5-7.500 2.500-11z" fill="#fff" /><ellipse cx="14.500" cy="18.500" rx="1.800" ry="2" fill="#5865f2" /><ellipse cx="21.500" cy="18.500" rx="1.800" ry="2" fill="#5865f2" /></symbol>
    <symbol id="a-telegram" viewBox="0 0 36 36"><circle cx="18" cy="18" r="13.500" fill="url(#gTg)" /><path d="M9 18l16-6.300c.8-.2 1.300.2 1 1.300L23.500 25c-.2 1-.9 1.100-1.600.7L14.500 20.300z" fill="#fff" /><path d="M14 20.300l9-6.500-7 7.200-.7 4z" fill="#a9cfe6" /></symbol>
    <symbol id="a-vapp" viewBox="0 0 36 36"><rect x="4.500" y="4.500" width="27" height="27" rx="3" fill="#fff" /><path d="M12 8.500l6 12.500 6-12.500h-3L18 17l-3-8.500z" fill="#585858" /><path d="M18 23v5" stroke="#38a5d8" stroke-width="2.200" /></symbol>

    <symbol id="weather" viewBox="0 0 36 32"><path d="M8.500 15.500a4.300 4.300 0 0 1-.2-8.500C9.500 3.500 15 3 17 6.500V15.500z" fill="#8fb2ea" stroke="#6f97d8" stroke-width=".6" /><path d="M29 11c2.500 7-3 17-12 17.500-5 0-9-3-10-7.500 9 2 15-2 16.500-10z" fill="url(#gMoon)" /><path d="M18.500 28.500a4 4 0 0 1 0-7.800c1.500-4 8-4.500 10 0 6-.6 6 7.500 1 7.800z" fill="#a9c6f6" stroke="#6f97d8" stroke-width=".8" /></symbol>
    <symbol id="up" viewBox="0 0 20 20"><path d="M3.500 13L10 6.500l6.500 6.500" fill="none" stroke="currentColor" stroke-width="1.900" /></symbol>
    <symbol id="wifi" viewBox="0 0 20 20"><g fill="none" stroke="currentColor" stroke-width="1.300"><path d="M.7 7.500c5-5.300 13.600-5.300 18.600 0" opacity=".28" /><path d="M3.200 10.300c3.700-4 9.900-4 13.600 0M5.800 12.800c2.300-2.600 6.100-2.600 8.400 0" /></g><circle cx="10" cy="15" r="1.900" fill="currentColor" /></symbol>
    <symbol id="sound" viewBox="0 0 22 20"><g fill="none" stroke="currentColor" stroke-width="1.200"><path d="M1.500 7.500H5L9.500 3.500v13L5 12.500H1.500zM12 7.500c1.200 1.500 1.200 3.500 0 5M14.500 5c2.500 3 2.500 7 0 10M17 2.500c4 4.500 4 10.500 0 15" /></g></symbol>
    <symbol id="battery" viewBox="0 0 22 20"><path d="M8 4.500h8.500A2 2 0 0 1 18.500 6.500V14a2 2 0 0 1-2 2H4a2 2 0 0 1-2-2V9.500" fill="none" stroke="currentColor" stroke-width="1.400" /><path d="M19 7.500l2.500 1v3.500L19 13z" fill="currentColor" /><path d="M4.500 0L1 5.500h2.500L2.500 10 6.500 4.500H4.200z" fill="currentColor" /></symbol>
    <symbol id="snooze" viewBox="0 0 20 20"><path d="M4 15V8c0-6 10-7.500 11.500-1.500V15l2 1.800H1.700z" fill="currentColor" /><path d="M6.500 17.800h6c-1 2.500-5 2.500-6 0z" fill="currentColor" /><path d="M7.500 8.500H12l-4.500 5H12" fill="none" stroke="#e9eef4" stroke-width="1.200" /><path d="M12 0h6.500v6H12z" fill="#e1e8ef" /><path d="M13 1h4.500L13 5.500h4.500" fill="none" stroke="currentColor" stroke-width="1.200" /></symbol>
  </svg>

  <main class="screen">
    <div class="desktop">
      <section v-for="w in windows" :key="w.id" class="window" :class="w.id">
        <header class="navbar">
          <span class="cell"><svg><use href="#gear" /></svg></span>
          <span class="cell"><svg><use href="#swap" /></svg></span>
          <span class="cell"><span class="avatar">K</span></span>
          <span class="cell dim"><svg><use href="#back" /></svg></span>
          <span class="cell dim"><svg><use href="#fwd" /></svg></span>
          <span class="cell"><svg><use href="#reload" /></svg></span>
          <div class="address">
            <span class="chip"><svg><use href="#lock" /></svg></span>
            <span v-if="w.active" class="chip strong"><svg><use href="#perms" /></svg></span>
            <span v-if="w.active" class="url typed"><i class="caret"></i><span v-fit="264">labs.vocareum.com/main/main.php</span></span>
            <span v-else class="url faded"><span v-fit="264">us-west-2.console.aws.<b>amazon.com</b></span></span>
            <span class="ico"><svg><use href="#shield" /></svg></span>
            <span v-if="!w.active" class="ico"><svg><use href="#radar" /></svg></span>
            <span class="ico"><svg><use href="#star" /></svg></span>
          </div>
          <span class="cell"><svg><use href="#puzzle" /></svg></span>
          <span class="cell"><svg class="more"><use href="#dots" /></svg></span>
          <span class="wbtn"><svg><use href="#wmin" /></svg></span>
          <span class="wbtn"><svg><use href="#wmax" /></svg></span>
          <span class="wbtn"><svg><use href="#wclose" /></svg></span>
        </header>

        <nav class="bookmarks">
          <svg><use href="#firefox" /></svg><span v-fit="101" class="b1">Getting Started</span>
          <svg><use href="#pin" /></svg><span v-fit="36" class="b2">Maps</span>
          <svg><use href="#apple" /></svg><span v-fit="40">Apple</span>
          <svg class="chev"><use href="#fwd" /></svg>
          <svg><use href="#folder" /></svg><span v-fit="114">Other Bookmarks</span>
        </nav>

        <div class="frame">
          <aside class="tabs">
            <div class="tablist">
              <div v-for="(t, i) in w.tabs" :key="i" class="tab" :class="{ selected: t.selected, pale: t.faded }">
                <svg v-if="t.kind === 'aws'" viewBox="0 0 20 20"><text x="0" y="9.500" font-family="Roboto, sans-serif" font-weight="700" font-size="13" textLength="9.500" lengthAdjust="spacingAndGlyphs" fill="#3c4858">aws</text><text x="10.500" y="8.500" font-family="Roboto, sans-serif" font-size="9" textLength="9.500" lengthAdjust="spacingAndGlyphs" fill="#8b929a">re/start</text><path d="M.7 12.500c1.300 5 7 5.500 8 .8" fill="none" stroke="#f6a821" stroke-width="1.700" /></svg>
                <svg v-else-if="t.kind === 'shy'" viewBox="0 0 20 20"><path d="M0 0h20v16.500H0z" fill="#2c2c2e" /><path d="M0 16.500h20V20H0z" fill="#a4c400" /><text x="1" y="11" font-family="'Open Sans', sans-serif" font-weight="700" font-size="8" textLength="18" lengthAdjust="spacingAndGlyphs" fill="#fff">SHY</text></svg>
                <span v-else-if="t.kind === 'mrb'" class="mrb">mr<br>b</span>
                <svg v-else><use :href="'#t-' + t.kind" /></svg>
              </div>
            </div>
            <div class="tools">
              <svg class="tpanel"><use href="#panel" /></svg>
              <span class="space"><i></i>M</span>
              <svg class="tdoc"><use href="#doc" /></svg>
              <svg class="thouse"><use href="#house" /></svg>
              <svg class="tplus"><use href="#plus" /></svg>
            </div>
          </aside>

          <article v-if="w.id === 'lab'" class="page lab-page">
            <div class="actions">
              <button v-for="b in labButtons" :key="b.label" :class="{ primary: b.primary, drop: b.caret }" :style="{ width: b.box + 'px', marginRight: b.gap + 'px' }">
                <span v-fit="b.text">{{ b.label }}</span><i v-if="b.caret"></i>
              </button>
            </div>
            <div class="language">
              <div class="select">EN-US<svg viewBox="0 0 12 8"><path d="M1.500 1.500L6 6l4.500-4.500" fill="none" stroke="#333" stroke-width="1.400" /></svg></div>
            </div>
            <div class="doc">
              <p class="cont">these instructions. Ideally, you will be able to see both browser tabs at the<br>same time, to make it easier to follow the lab steps.</p>
              <hr>
              <h2>Your Challenge</h2>
              <p class="lead">To finish the Challenge do the following:</p>
              <ol start="5">
                <li>
                  <span v-fit="587">Launch an Amazon RDS DB instance using either Amazon Aurora</span><br><span v-fit="607">Provisioned DB or MySQL database engines. Make a note of the DB</span><br>credentials, as it will be needed in next steps. Please note the following lab<br>restrictions:
                  <ul>
                    <li><span v-fit="614"><strong>DatabaseEngine</strong>: Supported engines are Amazon Aurora or MySQL.</span><br>Amazon Aurora serverless is not available.</li>
                    <li><strong>Template</strong>: Choose Dev/Test or Free tier.</li>
                    <li><span v-fit="556"><strong>Availability and durability</strong>: Avoid creating a standby instance.</span></li>
                    <li><strong>DB instance size</strong>: Choose Burstable classes - db.t3 instances of type<br>db. t*.micro to db.t*.medium.</li>
                    <li><strong>Storage</strong>: Choose General Purpose SSD (gp2) of a size up to 100 GB.<br>Provisioned IOPS access is restricted.</li>
                    <li><strong>Amazon VPC</strong>: Use the <em>Lab VPC</em></li>
                    <li><strong>Security Group</strong>: Include a security group that will allow the LinuxServer<br>to connect to the RDS instance.</li>
                    <li>For MySQL, under <strong>Additional configuration - Enable Enhanced<br>monitoring -</strong> Disable the option</li>
                  </ul>
                </li>
              </ol>
            </div>
            <i class="thumb"></i>
          </article>

          <article v-else class="page aws-page">
            <header class="topnav">
              <div class="row1">
                <svg class="logo" viewBox="0 0 40 26"><text x="1" y="13.500" font-family="'Open Sans', sans-serif" font-weight="600" font-size="21" textLength="37" lengthAdjust="spacingAndGlyphs" fill="#fff">aws</text><path d="M.8 18c9.500 7.300 24 7.500 34.500 1.500" fill="none" stroke="#f90" stroke-width="2.300" /><path d="M31.500 17.300c3-1.400 6.500-1.200 7 0 .4 1.500-.8 4-2.800 6" fill="none" stroke="#f90" stroke-width="1.700" /></svg>
                <i class="sep"></i>
                <span class="services"><svg><use href="#grid" /></svg><span v-fit="56" class="raise">Services</span></span>
                <svg class="find"><use href="#search" /></svg>
                <span class="slot"><svg><use href="#shell" /></svg></span>
                <span class="slot"><svg><use href="#bell" /></svg></span>
                <span class="slot"><svg><use href="#help" /></svg></span>
                <span class="slot"><svg><use href="#cog" /></svg></span>
                <span class="slot region"><span class="raise">O</span><svg class="tri"><use href="#tri" /></svg></span>
                <span class="slot user"><span v-fit="247" class="raise">voclabs/user3534509=Bernard_Kirk</span><svg class="tri"><use href="#tri" /></svg></span>
              </div>
              <div class="row2">
                <svg><use href="#s-ec2" /></svg><span v-fit="26" class="f1 raise">EC2</span>
                <svg><use href="#s-build" /></svg><span v-fit="69" class="raise">CodeBuild</span>
              </div>
            </header>

            <div class="body">
              <div class="sidenav"><svg viewBox="0 0 18 16"><path d="M0 1.500h18M0 8h18M0 14.500h18" stroke="#545b64" stroke-width="2.300" /></svg></div>
              <div class="main">
                <h1><span v-fit="230">Console Home</span><a v-fit="29">Info</a></h1>
                <div class="btns">
                  <button class="ghost"><span v-fit="195">Reset to default layout</span></button>
                  <button class="cta"><svg viewBox="0 0 14 14"><path d="M7 0v14M0 7h14" stroke="#16191f" stroke-width="2" /></svg><span v-fit="106">Add widgets</span></button>
                </div>
                <section class="card">
                  <header>
                    <svg class="drag" viewBox="0 0 12 20"><g fill="#545b64"><circle cx="2.500" cy="3" r="2" /><circle cx="9.300" cy="3" r="2" /><circle cx="2.500" cy="10" r="2" /><circle cx="9.300" cy="10" r="2" /><circle cx="2.500" cy="17" r="2" /><circle cx="9.300" cy="17" r="2" /></g></svg>
                    <h3 v-fit="167">Recently visited</h3><a v-fit="29">Info</a>
                    <svg class="kebab" viewBox="0 0 6 20"><g fill="#545b64"><circle cx="3" cy="3" r="2" /><circle cx="3" cy="10" r="2" /><circle cx="3" cy="17" r="2" /></g></svg>
                  </header>
                  <div class="cols">
                    <ul v-for="(col, c) in [firstColumn, secondColumn]" :key="c">
                      <li v-for="s in col" :key="s.name"><svg><use :href="'#s-' + s.icon" /></svg><a v-fit="s.width">{{ s.name }}</a></li>
                    </ul>
                  </div>
                  <footer>
                    <a v-fit="129">View all services</a>
                    <svg class="resize" viewBox="0 0 14 14"><path d="M1 12.500L12.500 1M8 12.500L13 8" stroke="#545b64" stroke-width="2" /></svg>
                  </footer>
                </section>
                <section class="card next"><i></i></section>
              </div>
              <div class="rail">
                <span><svg><use href="#info" /></svg></span>
                <span><svg><use href="#hexa" /></svg></span>
              </div>
            </div>

            <footer class="bottom">
              <div class="links">
                <svg><use href="#shell" /></svg>
                <span v-fit="64" class="fb">Feedback</span>
                <span v-fit="49" class="l1">Privacy</span>
                <span v-fit="41" class="l2">Terms</span>
                <span v-fit="129">Cookie preferences</span>
              </div>
              <div class="legal"><span v-fit="343">© 2024, Amazon Web Services, Inc. or its affiliates.</span></div>
            </footer>
          </article>
        </div>
      </section>
    </div>

    <footer class="taskbar">
      <div class="weather"><svg><use href="#weather" /></svg><span>24°</span></div>
      <div class="apps">
        <div v-for="a in apps" :key="a.icon" class="app" :class="{ current: a.current, open: a.open }">
          <svg><use :href="'#a-' + a.icon" /></svg>
          <b v-if="a.badge" :class="a.tone">{{ a.badge }}</b>
        </div>
      </div>
      <div class="tray">
        <svg class="up"><use href="#up" /></svg>
        <svg class="wifi"><use href="#wifi" /></svg>
        <svg class="snd"><use href="#sound" /></svg>
        <svg class="bat"><use href="#battery" /></svg>
        <div class="clock"><span v-fit="55">2:43 AM</span><span v-fit="77">10/21/2024</span></div>
        <svg class="snz"><use href="#snooze" /></svg>
      </div>
    </footer>
  </main>
</template>

<style>
body {
  margin: 0;
  overflow: hidden;
}
</style>

<style scoped>
* {
  box-sizing: border-box;
}
svg {
  display: block;
  flex: none;
  width: 20px;
  height: 20px;
}
.defs {
  position: absolute;
  width: 0;
  height: 0;
}
button {
  padding: 0;
  margin: 0;
  font: inherit;
}
.screen {
  width: 1920px;
  height: 1080px;
  display: flex;
  flex-direction: column;
  overflow: hidden;
  font-family: 'Noto Sans', 'Open Sans', sans-serif;
  color: #15141a;
  white-space: nowrap;
}
.desktop {
  height: 1020px;
  display: flex;
}
.window {
  display: flex;
  flex-direction: column;
  background: #ebebeb;
  border-top: 1px solid #77757a;
}
.lab {
  width: 962px;
  border-right: 1px solid #77757a;
}
.console {
  width: 958px;
}

/* browser chrome */
.navbar {
  height: 46px;
  display: flex;
  align-items: center;
  padding-left: 4.500px;
  color: #5b5b66;
}
.cell {
  flex: none;
  width: 45px;
  display: flex;
  justify-content: center;
}
.cell.dim {
  color: #a9a9ae;
}
.cell .more {
  width: 18px;
}
.avatar {
  width: 20px;
  height: 20px;
  border-radius: 50%;
  background: #15141a;
  color: #fff;
  font-size: 14px;
  font-weight: 700;
  line-height: 20px;
  text-align: center;
}
.address {
  flex: 1;
  min-width: 0;
  height: 39px;
  margin: 0 2.500px 0 1.500px;
  padding-left: 3px;
  display: flex;
  align-items: center;
  border: 1px solid #d6d6de;
  border-radius: 13px;
  color: #4a4a52;
}
.lab .address {
  background: #f4f4f8;
  border-color: #dcdbe8;
}
.chip {
  flex: none;
  width: 35px;
  height: 31px;
  display: flex;
  align-items: center;
  justify-content: center;
  border-radius: 8px;
  background: #e5e5e8;
}
.lab .chip {
  border-radius: 8px 0 0 8px;
  background: #e7e7ec;
}
.lab .chip.strong {
  border-radius: 0 8px 8px 0;
  background: #d9d8df;
}
.url {
  flex: 1;
  min-width: 0;
  height: 28px;
  overflow: hidden;
  font-size: 17.500px;
  line-height: 28px;
  display: flex;
  align-items: center;
  color: #15141a;
}
.typed {
  margin-left: 10px;
  margin-right: 0;
}
.typed .caret {
  flex: none;
  width: 1px;
  height: 23px;
  margin-right: 2px;
  background: #000;
}
.faded {
  margin-left: 9px;
  margin-right: 4px;
  color: #85858b;
  -webkit-mask-image: linear-gradient(90deg, #000 88%, transparent);
  mask-image: linear-gradient(90deg, #000 88%, transparent);
}
.faded b {
  font-weight: 400;
  color: #15141a;
}
.ico {
  flex: none;
  width: 33px;
  display: flex;
  justify-content: center;
}
.wbtn {
  flex: none;
  width: 57px;
  display: flex;
  justify-content: center;
  color: #111;
}
.cell + .wbtn {
  margin-left: 5px;
}
.console .cell + .wbtn {
  margin-left: 4px;
}
.bookmarks {
  height: 46px;
  padding: 0 15px 6px 7px;
  display: flex;
  align-items: center;
  font-size: 15.500px;
}
.console .bookmarks {
  padding-right: 14px;
}
.bookmarks > svg {
  margin-right: 5px;
}
.bookmarks .b1 {
  margin-right: 15px;
}
.bookmarks .b2 {
  margin-right: 14px;
}
.bookmarks .chev {
  margin: 0 14px 0 auto;
  color: #5b5b66;
}
.frame {
  flex: 1;
  display: flex;
  padding-bottom: 9px;
}

/* vertical tab strip */
.tabs {
  flex: none;
  width: 62px;
  display: flex;
  flex-direction: column;
  justify-content: space-between;
}
.tab {
  width: 45px;
  height: 45px;
  margin: 0 0 5px 7px;
  display: flex;
  align-items: center;
  justify-content: center;
  border-radius: 9px;
}
.tab.selected {
  background: #fff;
  box-shadow: 0 1px 3px rgba(0, 0, 0, 0.28);
}
.tab.pale {
  opacity: 0.55;
}
.mrb {
  width: 20px;
  height: 20px;
  padding-left: 2px;
  background: #1f1f1f;
  color: #ddd;
  font-size: 11px;
  line-height: 9px;
}
.tools {
  height: 206px;
  display: flex;
  flex-direction: column;
  align-items: center;
  padding-right: 3px;
  color: #5b5b66;
}
.tpanel {
  margin: 9px 0 29px;
}
.space {
  position: relative;
  height: 22px;
  width: 40px;
  font-size: 16px;
  line-height: 22px;
  text-align: center;
  color: #6a6a70;
}
.space i {
  position: absolute;
  left: 3px;
  top: 9px;
  width: 5px;
  height: 5px;
  border-radius: 50%;
  background: #cdb8ff;
}
.tdoc {
  margin-top: 13px;
}
.thouse {
  width: 17px;
  margin-top: 14px;
}
.tplus {
  margin-top: 28px;
}
.page {
  position: relative;
  flex: none;
  height: 918px;
  border: 1px solid #d3d3da;
  border-radius: 7px;
  background: #fff;
  overflow: hidden;
}

/* lab instructions */
.lab-page {
  width: 890px;
}
.actions {
  height: 88px;
  margin: 0 12px 0 13px;
  padding-top: 45px;
  display: flex;
  justify-content: flex-end;
  border-bottom: 1px solid #ebebeb;
}
.actions button {
  height: 42px;
  display: flex;
  align-items: center;
  justify-content: center;
  border: 1px solid #c7cdd1;
  border-radius: 3px;
  background: #f5f5f5;
  color: #2d3b45;
  font-size: 18px;
}
.actions .primary {
  background: #0068c8;
  border-color: #0068c8;
  color: #fff;
}
.actions .drop {
  padding-right: 4px;
}
.actions button i {
  margin-left: 5px;
  border: 5.500px solid transparent;
  border-top: 7px solid #2d3b45;
  border-bottom: 0;
}
.language {
  height: 51px;
  margin: 0 12px 0 13px;
  padding: 6px 6px 0;
  border-bottom: 1px solid #ebebeb;
}
.select {
  width: 275px;
  height: 38px;
  padding: 0 6px 0 8px;
  border: 1px solid #858585;
  display: flex;
  align-items: center;
  justify-content: space-between;
  font: 18px 'Liberation Sans', Arial, sans-serif;
  color: #555;
}
.select svg {
  width: 12px;
  height: 8px;
}
.doc {
  padding-left: 75px;
  font: 20px/32px 'Liberation Sans', Arial, sans-serif;
  color: #333;
  height: 777px;
  overflow: hidden;
}
.cont {
  margin: -3px 0 0 50px;
}
.doc hr {
  width: 738px;
  height: 1px;
  margin: 25px 0 0;
  border: 0;
  background: #e9e9e9;
}
.doc h2 {
  margin: 25px 0 0;
  font-size: 30px;
  line-height: 34px;
  font-weight: 400;
}
.lead {
  margin: 12px 0 0;
}
.doc ol {
  margin: 12px 0 0;
  padding-left: 50px;
}
.doc ul {
  margin: 13px 0 0;
  padding-left: 50px;
  list-style: none;
}
.doc ul li {
  position: relative;
  margin-bottom: 0.500px;
}
.doc ul li::before {
  content: '';
  position: absolute;
  left: -17.500px;
  top: 13px;
  width: 8px;
  height: 8px;
  border: 1px solid #666;
  border-radius: 50%;
}
.thumb {
  position: absolute;
  left: 870px;
  top: 421px;
  width: 4px;
  height: 160px;
  border-radius: 2px;
  background: #bdbdbd;
}

/* console */
.aws-page {
  display: flex;
  flex-direction: column;
  width: 888px;
}
.topnav {
  flex: none;
  height: 86px;
  background: #232f3e;
  border-bottom: 1px solid #4b5666;
  color: #fff;
  font-size: 15px;
}
.raise {
  margin-top: -2px;
}
.row1 {
  height: 52px;
  padding-left: 22px;
  display: flex;
  align-items: center;
}
.logo {
  width: 40px;
  height: 26px;
}
.sep {
  width: 1px;
  height: 28px;
  margin: 0 20px 0 21px;
  background: #4d5764;
}
.services {
  display: flex;
  align-items: center;
  gap: 10px;
  width: 109px;
}
.find {
  margin-right: 20px;
}
.slot {
  width: 62px;
  height: 28px;
  display: flex;
  align-items: center;
  justify-content: center;
  border-left: 1px solid #4d5764;
}
.slot .tri {
  width: 10px;
  height: 8px;
}
.region {
  width: 74px;
  gap: 8px;
  padding-right: 1px;
}
.user {
  width: auto;
  padding-left: 22px;
  gap: 8px;
}
.row2 {
  height: 33px;
  padding-left: 23px;
  display: flex;
  align-items: center;
}
.row2 svg {
  width: 30px;
  height: 30px;
  margin-right: 6px;
}
.row2 .f1 {
  margin-right: 20px;
}
.body {
  flex: 1;
  min-height: 0;
  display: flex;
  overflow: hidden;
}
.sidenav {
  position: relative;
  width: 50px;
  padding: 17px 0 0 16px;
  background: #fff;
  box-shadow: 1px 0 2px #7f8b96;
}
.sidenav svg {
  width: 18px;
  height: 16px;
}
.main {
  flex: 1;
  background: #f2f4f3;
  padding: 25px 0 0 50px;
  overflow: hidden;
}
.main a {
  color: #0073bb;
}
.main h1 {
  margin: 0;
  height: 46px;
  display: flex;
  align-items: baseline;
  gap: 11px;
  font-size: 34.500px;
  line-height: 46px;
  font-weight: 400;
  color: #16191f;
}
.main h1 a,
.card header a {
  font-size: 15px;
  font-weight: 700;
}
.main h1 a {
  position: relative;
  top: -1px;
}
.btns {
  display: flex;
  gap: 10px;
  margin-top: 15px;
}
.btns button {
  height: 39px;
  display: flex;
  align-items: center;
  justify-content: center;
  border: 1px solid #545b64;
  border-radius: 2px;
  background: #fff;
  font-weight: 700;
  font-size: 17px;
}
.btns .ghost {
  width: 246px;
  padding: 0 0 2px 1px;
  color: #545b64;
}
.btns .cta {
  width: 183px;
  padding: 0 2px 2px 0;
  border-color: #f90;
  background: #f90;
  color: #16191f;
  gap: 14px;
}
.btns .cta svg {
  width: 14px;
  height: 14px;
}
.card {
  width: 686px;
  height: 554px;
  margin-top: 31px;
  display: flex;
  flex-direction: column;
  background: #fff;
  box-shadow: 0 0 1px 0 #aab7b8, 1px 1px 2px 0 #5f6b7a;
}
.card header {
  height: 80px;
  padding: 0 28px 3px 24px;
  display: flex;
  align-items: center;
  background: #fafafa;
  border-bottom: 1px solid #eaeded;
}
.drag {
  width: 12px;
  height: 20px;
  margin-right: 14px;
}
.card h3 {
  margin: -2px 0 0;
  font-size: 22px;
  line-height: 30px;
  font-weight: 700;
  color: #16191f;
}
.card header a {
  margin: 3px 0 0 10px;
}
.kebab {
  width: 6px;
  height: 20px;
  margin-left: auto;
}
.cols {
  flex: 1;
  display: flex;
  gap: 50px;
  padding: 10px 25px 0;
}
.cols ul {
  width: 293px;
  margin: 0;
  padding: 0;
  list-style: none;
}
.cols li {
  height: 51px;
  display: flex;
  align-items: center;
  gap: 15px;
  border-bottom: 1px solid #eaeded;
  font-size: 17.500px;
}
.cols li:last-child {
  border-color: transparent;
}
.cols li svg {
  width: 30px;
  height: 30px;
}
.cols li a {
  margin-top: -1px;
}
.card footer {
  position: relative;
  height: 58px;
  padding: 0 0 1px 1px;
  display: flex;
  align-items: center;
  justify-content: center;
  border-top: 1px solid #eaeded;
  font-size: 17.500px;
}
.resize {
  position: absolute;
  right: 14px;
  bottom: 18px;
  width: 14px;
  height: 14px;
}
.card.next {
  margin-top: 26px;
  background: #fafafa;
}
.next i {
  width: 208px;
  height: 40px;
  margin: 20px 0 0 421px;
  border: 1px solid #545b64;
  border-radius: 3px;
  background: #fff;
}
.rail {
  width: 52px;
  background: #fff;
  border-left: 1px solid #d5dbdb;
  color: #545b64;
}
.rail span {
  height: 51px;
  display: flex;
  align-items: center;
  justify-content: center;
}
.rail span:first-child {
  border-bottom: 1px solid #d5dbdb;
}
.bottom {
  flex: none;
  height: 67px;
  background: #232f3e;
  color: #fff;
  font-size: 15px;
}
.links {
  height: 38px;
  padding: 0 20px;
  display: flex;
  align-items: center;
}
.fb {
  margin: 0 auto 0 31px;
}
.l1,
.l2 {
  margin-right: 31px;
}
.legal {
  height: 24px;
  line-height: 24px;
  text-align: center;
}

/* taskbar */
.taskbar {
  height: 60px;
  display: flex;
  border-top: 1px solid #b4bec3;
  background: linear-gradient(90deg, #dcefee 0, #e4ebec 260px, #dfeaf7 380px, #d9e5f2 620px, #d6e0ec 760px, #daeff4 930px, #daf0f5 1050px, #d9e7f1 1160px, #daf0f6 1300px, #dbf0f7 1500px, #e3eaf2 1610px, #e2e8f0 1920px);
}
.weather {
  position: relative;
  flex: none;
  width: 409.500px;
  padding: 11px 0 0 23px;
}
.weather svg {
  width: 36px;
  height: 32px;
}
.weather span {
  position: absolute;
  left: 37px;
  top: 8px;
  width: 29px;
  height: 20px;
  border-radius: 10px;
  background: rgba(248, 250, 250, 0.92);
  font-size: 14.500px;
  line-height: 19px;
  text-align: center;
  letter-spacing: -0.500px;
}
.apps {
  flex: none;
  display: flex;
}
.app {
  position: relative;
  width: 55.100px;
  height: 58px;
  display: flex;
  align-items: center;
  justify-content: center;
}
.app svg {
  position: relative;
  width: 36px;
  height: 36px;
}
.app.open::after {
  content: '';
  position: absolute;
  left: 24px;
  bottom: 4px;
  width: 8px;
  height: 4px;
  border-radius: 2px;
  background: #84898d;
}
.app.current::before {
  content: '';
  position: absolute;
  left: 4px;
  top: 5px;
  width: 43px;
  height: 50px;
  border: 1px solid #dde6ee;
  border-radius: 4px;
  background: #eef6fc;
  box-shadow: 5px 0 0 -1px #e9f4f9;
}
.app.current::after {
  left: 18px;
  width: 20px;
  background: #5f7a8a;
}
.app b {
  position: absolute;
  font-weight: 400;
  font-size: 13.500px;
  text-align: center;
  color: #fff;
}
.app .slate {
  left: 26px;
  top: 8px;
  width: 26px;
  height: 20px;
  line-height: 20px;
  border-radius: 10px;
  background: #5f7380;
}
.app .coral {
  left: 30px;
  top: 9px;
  width: 18px;
  height: 18px;
  line-height: 17px;
  border-radius: 9px;
  background: #ee5f5c;
}
.app .red {
  left: 31px;
  top: 14px;
  width: 19px;
  height: 14px;
  line-height: 14px;
  border-radius: 4px;
  background: #f0403c;
  letter-spacing: -0.800px;
  font-size: 11.500px;
}
.tray {
  flex: 1;
  height: 57px;
  display: flex;
  align-items: center;
  color: #1b1b1b;
}
.tray .up {
  margin-left: 136px;
}
.tray .wifi {
  margin-left: 20px;
}
.tray .snd {
  width: 22px;
  margin-left: 9px;
}
.tray .bat {
  width: 22px;
  margin-left: 8px;
}
.clock {
  width: 97px;
  display: flex;
  flex-direction: column;
  align-items: flex-end;
  font-size: 14.500px;
  line-height: 20px;
}
.snz {
  margin-left: 10px;
}
</style>
